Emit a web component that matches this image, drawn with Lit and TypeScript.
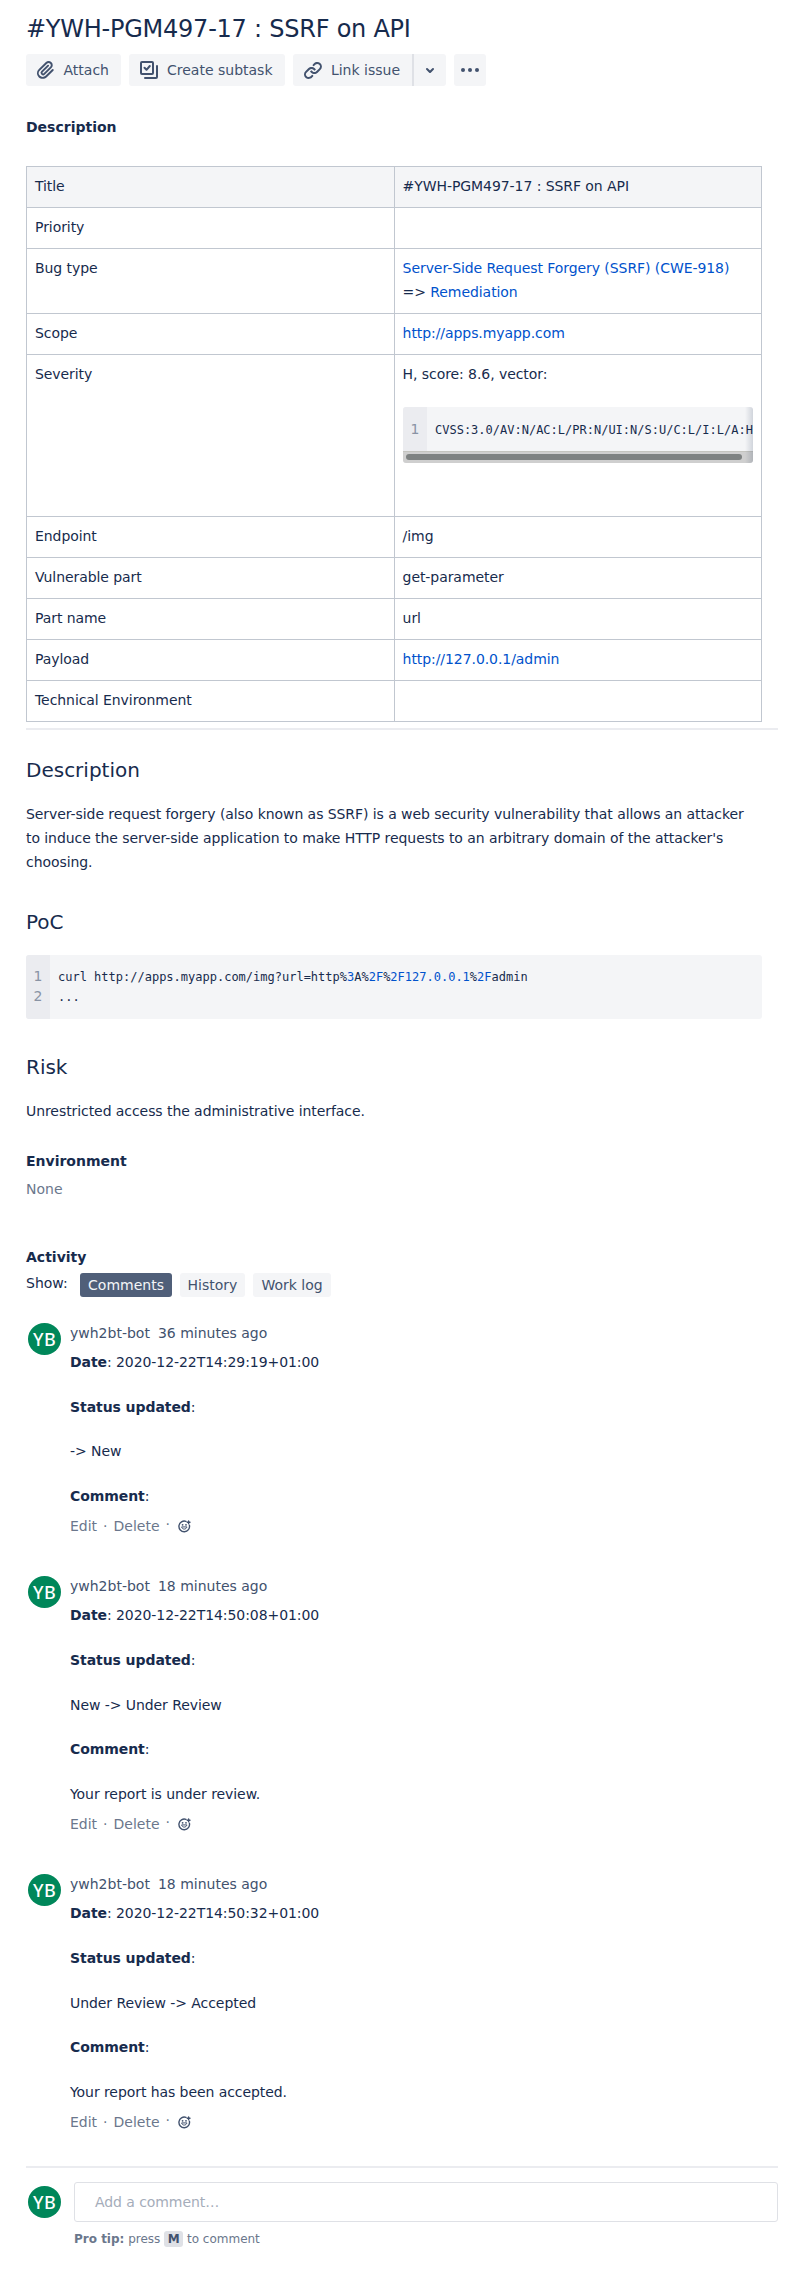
import { LitElement, html, css, svg, nothing } from "lit";
import { customElement, property } from "lit/decorators.js";

const base = css`
  * { box-sizing: border-box; }
  p, h1, h2, h3 { margin: 0; }
`;

@customElement("user-avatar")
class UserAvatar extends LitElement {
  static styles = css`
    :host { display: block; width: 32px; flex: none; }
    .disc { width: 32px; height: 32px; border-radius: 50%; background: #00875a; color: #fff; display: flex; align-items: center; justify-content: center; font: 500 18px/32px "Noto Sans", sans-serif; letter-spacing: 0.4px; padding-left: 0.6px; }
  `;
  render() { return html`<div class="disc">YB</div>`; }
}

@customElement("code-block")
class CodeBlock extends LitElement {
  @property({ attribute: false }) lines: unknown[] = [];
  @property({ type: Boolean, reflect: true }) scroll = false;
  static styles = [base, css`
    :host { display: block; }
    .box { position: relative; background: #f4f5f7; border-radius: 3px; overflow: hidden; }
    .cols { display: flex; }
    .gutter { width: 24px; flex: none; background: #ebecf0; color: #8993a4; padding: 11px 0 13px; text-align: center; font: 14px/20px "DejaVu Sans", sans-serif; }
    .code { padding: 12px 8px; font: 12px/20px "DejaVu Sans Mono", monospace; letter-spacing: 0; color: #172b4d; white-space: pre; }
    :host([scroll]) .gutter { padding: 12px 0; }
    :host([scroll]) .code { padding: 13px 8px 11px; }
    .bar { height: 12px; background: #cfcfcf; border-top: 1px solid #c4c4bf; padding: 2px 11px 3px 3px; }
    .thumb { height: 6px; border-radius: 3px; background: #7e8282; }
    .shade { position: absolute; right: 0; top: 0; bottom: 0; width: 8px; background: linear-gradient(to left, rgba(9,30,66,.15), rgba(9,30,66,0)); }
  `];
  render() {
    return html`<div class="box">
      <div class="cols">
        <div class="gutter">${this.lines.map((_, i) => html`<div>${i + 1}</div>`)}</div>
        <div class="code">${this.lines.map((l) => html`<div>${l}</div>`)}</div>
      </div>
      ${this.scroll ? html`<div class="bar"><div class="thumb"></div></div><div class="shade"></div>` : nothing}
    </div>`;
  }
}

@customElement("issue-comment")
class IssueComment extends LitElement {
  @property() when = "";
  @property() date = "";
  @property() status = "";
  @property() text = "";
  static styles = [base, css`
    :host { display: flex; gap: 10px; padding: 3.5px 0 0 2px; }
    .head { display: flex; gap: 8px; color: #42526e; line-height: 20px; height: 27.6px; }
    .body { display: flex; flex-direction: column; gap: 20.57px; line-height: 24px; letter-spacing: -0.07px; }
    .actions { display: flex; line-height: 20px; margin-top: 8.2px; color: #6b778c; }
    .dot { width: 16.4px; text-align: center; }
    .dot.high { position: relative; top: -2px; }
    svg { margin: 4px 0 0 2px; }
  `];
  render() {
    return html`<user-avatar></user-avatar>
      <div>
        <div class="head"><span>ywh2bt-bot</span><span>${this.when}</span></div>
        <div class="body">
          <p><b>Date</b>: ${this.date}</p>
          <p><b>Status updated</b>:</p>
          <p>${this.status}</p>
          <p><b>Comment</b>:</p>
          ${this.text ? html`<p>${this.text}</p>` : nothing}
        </div>
        <div class="actions">
          <span>Edit</span><span class="dot">·</span><span>Delete</span><span class="dot high">·</span>
          <svg width="13" height="13" viewBox="0 0 13 13" fill="none" stroke="#42526e" stroke-width="1.4" stroke-linecap="round">
            <path d="M8 1.4A5.3 5.3 0 1 0 11.4 5.2"/>
            <path d="M3.7 7.3c.5 2.5 4.6 2.5 5.1 0z" stroke-width="1"/>
            <circle cx="4.6" cy="4.8" r=".9" fill="#42526e" stroke="none"/>
            <circle cx="8" cy="4.8" r=".9" fill="#42526e" stroke="none"/>
            <path d="M10.6 .9v2.8M9.2 2.3h2.8"/>
          </svg>
        </div>
      </div>`;
  }
}

const attach = svg`<path fill="currentColor" d="M11.643 17.965c-1.53 1.495-4.016 1.496-5.542.004a3.773 3.773 0 01.002-5.412l7.147-6.985a2.316 2.316 0 013.233-.003c.893.873.895 2.282.004 3.153l-6.703 6.55a.653.653 0 01-.914-.008.62.62 0 010-.902l6.229-6.087a.941.941 0 000-1.353.995.995 0 00-1.384 0l-6.23 6.087a2.502 2.502 0 00-.002 3.607 2.643 2.643 0 003.683.009l6.703-6.55a4.074 4.074 0 00-.003-5.859 4.306 4.306 0 00-6.002.003l-7.148 6.985a5.655 5.655 0 00-.001 8.118c2.29 2.24 6.015 2.239 8.313-.005l6.788-6.633a.941.941 0 000-1.354.995.995 0 00-1.384 0l-6.788 6.635z"/>`;
const subtask = svg`<g fill="none" stroke="currentColor" stroke-width="2" stroke-linecap="round" stroke-linejoin="round"><rect x="4" y="4" width="12" height="12" rx="1" stroke-linecap="butt"/><path d="M7.5 9.8l2 2 3.3-3.8M20 8v11a1 1 0 0 1-1 1H8"/></g>`;
const link = svg`<path fill="currentColor" d="M12.856 5.457l-.937.92a1.002 1.002 0 000 1.437 1.047 1.047 0 001.463 0l.984-.966c.967-.95 2.542-1.135 3.602-.288a2.54 2.54 0 01.203 3.81l-2.903 2.852a2.646 2.646 0 01-3.696 0l-1.11-1.09L9 13.57l1.108 1.089c1.822 1.788 4.802 1.788 6.622 0l2.905-2.852a4.558 4.558 0 00-.357-6.82c-1.893-1.517-4.695-1.226-6.422.47M11.144 19.543l.937-.92a1.002 1.002 0 000-1.437 1.047 1.047 0 00-1.462 0l-.985.966c-.967.95-2.542 1.135-3.602.288a2.54 2.54 0 01-.203-3.81l2.903-2.852a2.646 2.646 0 013.696 0l1.11 1.09L15 11.43l-1.108-1.089c-1.822-1.788-4.802-1.788-6.622 0l-2.905 2.852a4.558 4.558 0 00.357 6.82c1.893 1.517 4.695 1.226 6.422-.47"/>`;
const chevron = svg`<path fill="currentColor" d="M8.292 10.293a1.009 1.009 0 000 1.419l2.939 2.965c.218.215.5.322.779.322s.556-.107.769-.322l2.93-2.955a1.01 1.01 0 000-1.419.987.987 0 00-1.406 0l-2.298 2.317-2.307-2.327a.99.99 0 00-1.406 0z"/>`;
const more = svg`<g fill="currentColor"><circle cx="5" cy="12" r="2"/><circle cx="12" cy="12" r="2"/><circle cx="19" cy="12" r="2"/></g>`;
const icon = (g: unknown) => html`<svg width="24" height="24" viewBox="0 0 24 24">${g}</svg>`;

// Token colour lives on an element of its own so that it applies inside the code block's shadow root.
@customElement("code-number")
class CodeNumber extends LitElement {
  static styles = css`:host { color: #0052cc; }`;
  render() { return html`<slot></slot>`; }
}

@customElement("app-root")
class AppRoot extends LitElement {
  static styles = [base, css`
    :host { display: block; height: 2274px; background: #fff; color: #172b4d; font: 14px/24px "DejaVu Sans", sans-serif; padding: 15px 22px 0 26px; box-sizing: border-box; }
    svg { display: block; }
    .title { font-size: 24px; line-height: 28px; font-weight: 400; letter-spacing: -0.24px; }
    .tools { display: flex; gap: 8px; margin-top: 11px; color: #42526e; }
    .btn { display: flex; align-items: center; height: 32px; background: #f4f5f7; border-radius: 3px; padding: 0 12px 0 8px; gap: 6px; line-height: 32px; white-space: nowrap; }
    .attach { width: 95px; }
    .subtask { width: 156px; }
    .link { width: 119px; border-radius: 3px 0 0 3px; }
    .split { display: flex; }
    .drop { width: 34px; padding: 0 0 0 4px; border-left: 2px solid #dfe1e6; border-radius: 0 3px 3px 0; }
    .dots { width: 32px; padding: 0 4px; }
    .label { font-size: 14px; line-height: 20px; font-weight: 700; }
    .desc { margin-top: 31px; }
    .grid { display: grid; grid-template-columns: 368px 367px; width: 736px; margin-top: 29px; border-top: 1px solid #c1c7d0; border-left: 1px solid #c1c7d0; letter-spacing: -0.07px; }
    .cell { padding: 7px 8px 9px; min-height: 41px; border-right: 1px solid #c1c7d0; border-bottom: 1px solid #c1c7d0; min-width: 0; }
    .cell:nth-child(even) { padding-left: 7.6px; }
    .head { background: #f4f5f7; }
    a { color: #0052cc; text-decoration: none; }
    .vector { margin: 21px 0 44px 0.4px; }
    .rule { height: 2px; background: #ebecf0; }
    .top { margin-top: 6px; }
    .bottom { margin-top: 34.4px; }
    .h { font-size: 20px; line-height: 24px; font-weight: 400; margin-top: 36px; }
    .h.first { margin-top: 28px; }
    .copy { width: 728px; margin-top: 20px; letter-spacing: -0.07px; }
    .poc { width: 736px; margin-top: 21px; }
    .env { margin-top: 28px; }
    .none { color: #6b778c; line-height: 20px; margin-top: 8px; }
    .activity { margin-top: 48px; }
    .filters { display: flex; margin-top: 6px; gap: 8px; }
    .show { width: 46px; line-height: 20px; }
    .tab { height: 24px; line-height: 24px; border-radius: 3px; background: #f4f5f7; color: #42526e; text-align: center; }
    .t1 { width: 92px; background: #505f79; color: #f4f5f7; }
    .t2 { width: 65px; }
    .t3 { width: 78px; }
    .comments { display: flex; flex-direction: column; gap: 36.4px; margin-top: 22px; }
    .add { display: flex; gap: 14px; padding-left: 2px; margin-top: 14px; }
    .me { margin-top: 4px; }
    .entry { flex: 1; }
    .input { height: 40px; border: 1px solid #dfe1e6; border-radius: 3px; padding-left: 20px; line-height: 38px; color: #a5adba; letter-spacing: -0.07px; }
    .tip { display: flex; gap: 3.8px; margin-top: 9px; font-size: 12px; line-height: 16px; color: #6b778c; }
    .key { width: 19px; border-radius: 3px; background: #dfe1e6; color: #42526e; text-align: center; font-weight: 700; }
  `];

  private row(label: string, value: unknown, cls = "") {
    return html`<div class="cell ${cls}">${label}</div><div class="cell ${cls}">${value}</div>`;
  }

  render() {
    const n = (t: string) => html`<code-number>${t}</code-number>`;
    return html`
      <h1 class="title">#YWH-PGM497-17 : SSRF on API</h1>
      <div class="tools">
        <div class="btn attach">${icon(attach)}<span>Attach</span></div>
        <div class="btn subtask">${icon(subtask)}<span>Create subtask</span></div>
        <div class="split">
          <div class="btn link">${icon(link)}<span>Link issue</span></div>
          <div class="btn drop">${icon(chevron)}</div>
        </div>
        <div class="btn dots">${icon(more)}</div>
      </div>
      <h3 class="label desc">Description</h3>
      <div class="grid">
        ${this.row("Title", "#YWH-PGM497-17 : SSRF on API", "head")}
        ${this.row("Priority", "")}
        ${this.row("Bug type", html`<a>Server-Side Request Forgery (SSRF) (CWE-918)</a><br>=&gt; <a>Remediation</a>`)}
        ${this.row("Scope", html`<a>http://apps.myapp.com</a>`)}
        ${this.row("Severity", html`H, score: 8.6, vector:<code-block class="vector" scroll .lines=${["CVSS:3.0/AV:N/AC:L/PR:N/UI:N/S:U/C:L/I:L/A:H"]}></code-block>`)}
        ${this.row("Endpoint", "/img")}
        ${this.row("Vulnerable part", "get-parameter")}
        ${this.row("Part name", "url")}
        ${this.row("Payload", html`<a>http://127.0.0.1/admin</a>`)}
        ${this.row("Technical Environment", "")}
      </div>
      <div class="rule top"></div>
      <h2 class="h first">Description</h2>
      <p class="copy">Server-side request forgery (also known as SSRF) is a web security vulnerability that allows an attacker to induce the server-side application to make HTTP requests to an arbitrary domain of the attacker's choosing.</p>
      <h2 class="h">PoC</h2>
      <code-block class="poc" .lines=${[
        html`curl http://apps.myapp.com/img?url=http%${n("3")}A%${n("2F")}%${n("2F127.0.0.1")}%${n("2F")}admin`, "..."]}></code-block>
      <h2 class="h">Risk</h2>
      <p class="copy">Unrestricted access the administrative interface.</p>
      <h3 class="label env">Environment</h3>
      <p class="none">None</p>
      <h3 class="label activity">Activity</h3>
      <div class="filters"><span class="show">Show:</span><span class="tab t1">Comments</span><span class="tab t2">History</span><span class="tab t3">Work log</span></div>
      <div class="comments">
        <issue-comment when="36 minutes ago" date="2020-12-22T14:29:19+01:00" status="-> New"></issue-comment>
        <issue-comment when="18 minutes ago" date="2020-12-22T14:50:08+01:00" status="New -> Under Review" text="Your report is under review."></issue-comment>
        <issue-comment when="18 minutes ago" date="2020-12-22T14:50:32+01:00" status="Under Review -> Accepted" text="Your report has been accepted."></issue-comment>
      </div>
      <div class="rule bottom"></div>
      <div class="add">
        <user-avatar class="me"></user-avatar>
        <div class="entry">
          <div class="input">Add a comment…</div>
          <div class="tip"><b>Pro tip:</b><span>press</span><span class="key">M</span><span>to comment</span></div>
        </div>
      </div>`;
  }
}
